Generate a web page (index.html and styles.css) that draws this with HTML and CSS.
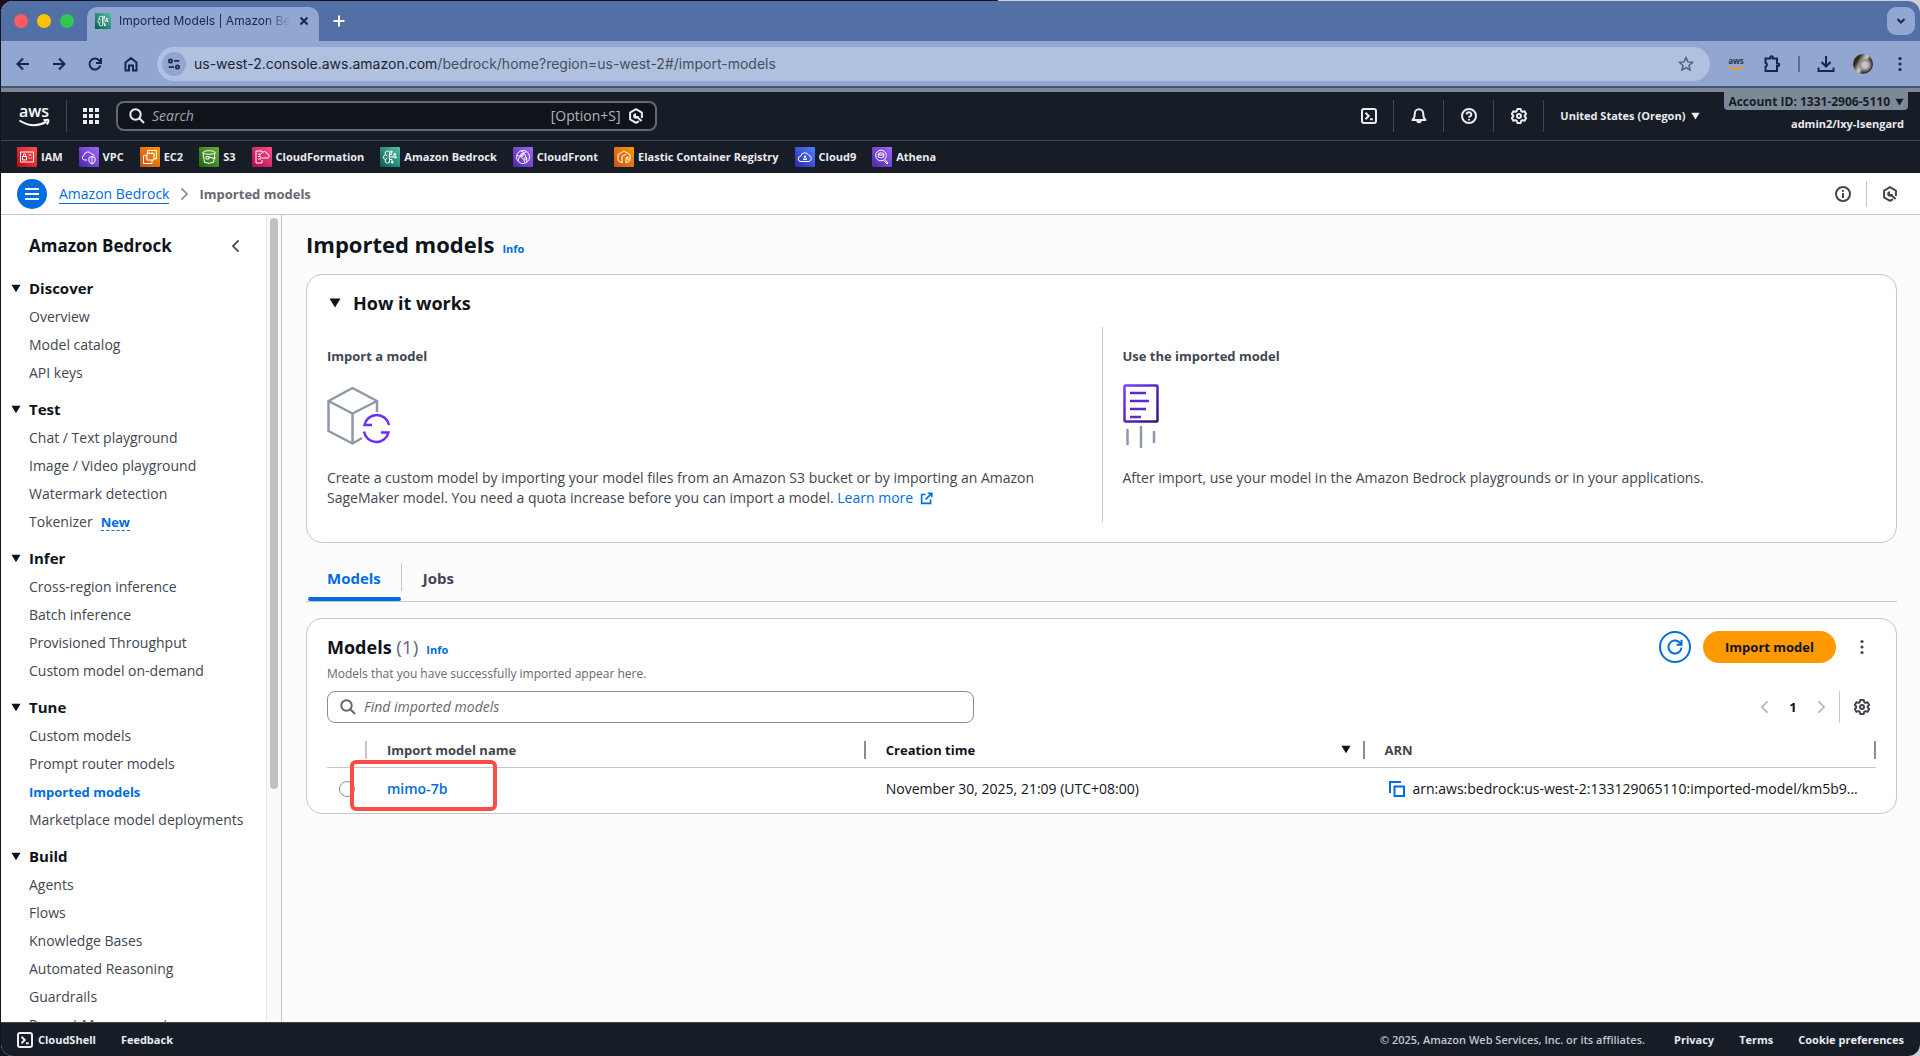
FILE: index.html
```html
<!DOCTYPE html>
<html lang="en">

<head>
    <meta charset="UTF-8">
    <meta name="viewport" content="width=device-width, initial-scale=1.0">
    <title>Imported Models | Amazon Bedrock</title>
    <link rel="stylesheet" href="styles.css">
</head>

<body>

    <!-- Shared icons -->
    <svg class="sprite" aria-hidden="true">
        <symbol id="i-search" viewBox="0 0 16 16">
            <circle cx="6.5" cy="6.5" r="5.2" />
            <path d="M10.3 10.3 15 15" />
        </symbol>
        <symbol id="i-gear" viewBox="0 0 16 16">
            <path d="M6.3 1h3.4l.5 2.1 1.3.8 2.1-.7 1.6 2.9-1.5 1.400v1l1.500 1.400-1.600 2.900-2.100-.7-1.300.8-.5 2.100H6.300l-.5-2.100-1.300-.8-2.100.7L.8 9.900l1.500-1.400v-1L.8 6.100l1.600-2.900 2.100.7 1.300-.8z" stroke-linejoin="round" />
            <circle cx="8" cy="8" r="2" />
        </symbol>
        <symbol id="i-hex" viewBox="0 0 16 16">
            <path d="M13.900 10V4.600L8 1.200 2.100 4.600v6.800L8 14.800l3-1.700" stroke-linejoin="round" />
            <path d="M8 5.200a2.800 2.800 0 1 0 2.800 2.800L8 8z" fill="currentColor" stroke="none" />
            <path d="m8.500 8.500 5.200 4.500" />
        </symbol>
        <symbol id="i-shell" viewBox="0 0 16 16">
            <rect x="1" y="1" width="14" height="14" rx="2" />
            <path d="m4.5 4.8 3.2 3.2-3.2 3.2M9 11.2h2.8" />
        </symbol>
        <symbol id="i-left" viewBox="0 0 16 16">
            <path d="M11 1.500 4.500 8l6.500 6.500" />
        </symbol>
        <symbol id="i-right" viewBox="0 0 16 16">
            <path d="M5 1.500 11.500 8 5 14.500" />
        </symbol>
        <symbol id="i-caret" viewBox="0 0 12 10">
            <path d="M.5 .5h11L6 9.500z" fill="currentColor" stroke="none" />
        </symbol>
        <symbol id="i-dots" viewBox="0 0 16 16">
            <g fill="currentColor" stroke="none">
                <circle cx="8" cy="2.5" r="1.6" />
                <circle cx="8" cy="8" r="1.6" />
                <circle cx="8" cy="13.5" r="1.6" />
            </g>
        </symbol>
        <symbol id="i-bedrock" viewBox="0 0 20 20">
            <path d="M9.500 4.500v11M9.500 5 7.500 3.800 5.300 5v2.600L3.700 9v2.500l1.600 1v2.600l2.200 1.200 2-1.200M5.300 7.600 7.500 9M5.300 12.500l2-1.300M11.500 7.500V5.200M11.500 7.500h-2M9.500 10h5M9.500 12.500h2.500v2.300M12.500 10l1.800-2.400" />
            <g fill="currentColor" stroke="none">
                <circle cx="11.5" cy="4.7" r="1.2" />
                <circle cx="14.8" cy="7.2" r="1.2" />
                <circle cx="15.5" cy="10.2" r="1.2" />
                <circle cx="12.3" cy="15.3" r="1.2" />
            </g>
        </symbol>
    </svg>

    <div class="window">

        <!-- Browser tab strip -->
        <div class="tab-strip">
            <div class="lights">
                <span class="light red"></span>
                <span class="light yellow"></span>
                <span class="light green"></span>
            </div>
            <div class="browser-tab">
                <span class="favicon bedrock"><svg><use href="#i-bedrock" /></svg></span>
                <span class="tab-title">Imported Models | Amazon Bedrock</span>
                <button class="icon-btn" aria-label="Close tab">
                    <svg class="s10" viewBox="0 0 10 10"><path d="m1.5 1.5 7 7M8.5 1.5l-7 7" /></svg>
                </button>
            </div>
            <button class="icon-btn new-tab" aria-label="New tab">
                <svg class="s12" viewBox="0 0 12 12"><path d="M6 .5v11M.5 6h11" /></svg>
            </button>
            <button class="tab-search" aria-label="Search tabs">
                <svg class="s10" viewBox="0 0 10 10"><path d="m1.5 3 3.5 3.5L8.5 3" /></svg>
            </button>
        </div>

        <!-- Browser toolbar -->
        <div class="toolbar">
            <button class="icon-btn nav-btn" aria-label="Back"><svg viewBox="0 0 16 16"><path d="M14 8H2.5M8 2.5 2.5 8 8 13.5" /></svg></button>
            <button class="icon-btn nav-btn" aria-label="Forward"><svg viewBox="0 0 16 16"><path d="M2 8h11.5M8 2.5 13.5 8 8 13.5" /></svg></button>
            <button class="icon-btn nav-btn" aria-label="Reload"><svg viewBox="0 0 16 16"><path d="M13.3 9.5A5.5 5.5 0 1 1 12.5 4.8L13.5 6" /><path d="M14 2v5H9" /></svg></button>
            <button class="icon-btn nav-btn" aria-label="Home"><svg viewBox="0 0 16 16"><path d="M2.5 6.5 8 2l5.5 4.5v8H10v-5H6v5H2.5z" /></svg></button>
            <div class="omnibox">
                <button class="site-info" aria-label="Site information">
                    <svg viewBox="0 0 16 16"><circle cx="4" cy="4.5" r="1.9" /><path d="M8 4.5h6" /><circle cx="12" cy="11.5" r="1.9" /><path d="M2 11.5h6" /></svg>
                </button>
                <span class="url">us-west-2.console.aws.amazon.com<span class="url-path">/bedrock/home?region=us-west-2#/import-models</span></span>
                <button class="icon-btn star" aria-label="Bookmark">
                    <svg viewBox="0 0 16 16"><path d="m8 1.5 1.9 4.4 4.7.4-3.6 3.1 1.1 4.7L8 11.6l-4.100 2.500L5 9.400 1.400 6.300l4.700-.4z" /></svg>
                </button>
            </div>
            <button class="icon-btn ext" aria-label="AWS extension">
                <svg class="ext-aws" viewBox="0 0 16 16"><text x="8" y="8">aws</text><path d="M1 10.5q7 5 13.500.3" /></svg>
            </button>
            <button class="icon-btn ext" aria-label="Extensions">
                <svg class="s18" viewBox="0 0 18 18"><path d="M2.5 3.5h4.800V2.500a1.300 1.300 0 0 1 2.600 0v1H14v5h1a1.300 1.300 0 0 1 0 2.600h-1V16H2.500v-4.200a2.100 2.100 0 0 0 0-4z" /></svg>
            </button>
            <span class="toolbar-divider"></span>
            <button class="icon-btn ext" aria-label="Downloads">
                <svg class="s18" viewBox="0 0 18 18"><path d="M9 1v10M4.500 7 9 11.500 13.500 7M1.500 12.500V16h15v-3.500" /></svg>
            </button>
            <button class="avatar" aria-label="Profile"></button>
            <button class="icon-btn ext" aria-label="Browser menu"><svg><use href="#i-dots" /></svg></button>
        </div>
        <div class="account-strip"></div>

        <!-- AWS header -->
        <header class="aws-header">
            <a class="aws-logo" href="#" aria-label="AWS home">
                <svg viewBox="0 0 32 24">
                    <text x="16" y="13">aws</text>
                    <path d="M1.500 16.500q14 9 27 1.200" />
                    <path d="M25.500 16.300q5-1.300 5 .2t-1.700 4" />
                </svg>
            </a>
            <button class="icon-btn apps" aria-label="Services">
                <svg viewBox="0 0 16 16">
                    <path d="M0 0h4v4H0zM6 0h4v4H6zM12 0h4v4h-4zM0 6h4v4H0zM6 6h4v4H6zM12 6h4v4h-4zM0 12h4v4H0zM6 12h4v4H6zM12 12h4v4h-4z" fill="currentColor" stroke="none" />
                </svg>
            </button>
            <div class="global-search">
                <svg><use href="#i-search" /></svg>
                <input type="text" placeholder="Search" aria-label="Search">
                <span class="shortcut">[Option+S]</span>
                <svg><use href="#i-hex" /></svg>
            </div>
            <div class="header-tools">
                <button class="tool" aria-label="CloudShell"><svg><use href="#i-shell" /></svg></button>
                <button class="tool" aria-label="Notifications"><svg viewBox="0 0 16 16"><path d="M1.500 12h13c-1.800-1.500-2.300-3-2.300-6.500a4.200 4.200 0 0 0-8.400 0C3.800 9 3.300 10.500 1.500 12z" stroke-linejoin="round" /><path d="M6.300 12.500a1.700 1.700 0 0 0 3.400 0" /></svg></button>
                <button class="tool" aria-label="Help"><svg viewBox="0 0 16 16"><circle cx="8" cy="8" r="7" /><path d="M5.800 6.500a2.200 2.200 0 1 1 3.300 1.800q-1.100.6-1.100 1.500M8 11v1.600" /></svg></button>
                <button class="tool" aria-label="Settings"><svg><use href="#i-gear" /></svg></button>
            </div>
            <button class="region">United States (Oregon) <svg class="caret-sm"><use href="#i-caret" /></svg></button>
            <div class="account">
                <button class="account-id">Account ID: 1331-2906-5110 <svg class="caret-sm"><use href="#i-caret" /></svg></button>
                <span class="user">admin2/lxy-Isengard</span>
            </div>
        </header>

        <!-- Favorites -->
        <nav class="favorites" aria-label="Favorites">
            <a href="#"><span class="svc iam"><svg viewBox="0 0 20 20"><path d="M3.500 5h13v10h-13zM5.500 9.500h4v3.500h-4zM6.300 9.500V8a1.200 1.200 0 0 1 2.400 0v1.500M11.500 8h3M11.500 11h1.200M13.700 11h1" /></svg></span>IAM</a>
            <a href="#"><span class="svc purple"><svg viewBox="0 0 20 20"><path d="M8 13H5.500A2.300 2.300 0 0 1 5 8.500 4 4 0 0 1 12.500 7q2.500-.2 2.800 2M10 10.500l3-1.200 3 1.200v3.500q-.5 2-3 3-2.500-1-3-3zM13 9.500v7" /></svg></span>VPC</a>
            <a href="#"><span class="svc orange"><svg viewBox="0 0 20 20"><path d="M7.500 3.500h9V12h-2M7.500 3.500V6M7 6.500h7V13H7zM3.500 8.500H7M3.500 8.500v8H12V13M9 5v1.500M12 5v1.500M14 8h1.500M14 11h1.500M5.500 11H7" /></svg></span>EC2</a>
            <a href="#"><span class="svc green"><svg viewBox="0 0 20 20"><ellipse cx="10" cy="5.500" rx="6" ry="1.800" /><path d="m4 5.500 1.400 9.800q4.600 2 9.200 0L16 5.500M9.500 10l6.200 1.500q1.800.3-.4-1.500M7 9.500h3v2.500H7z" /></svg></span>S3</a>
            <a href="#"><span class="svc pink"><svg viewBox="0 0 20 20"><path d="M10 5V4H4v12h6v-3M6 7h2M6 9.500h2M6 12h3M9.500 11h5.500a2 2 0 0 0 .3-4 3 3 0 0 0-5.800-.3A2.200 2.200 0 0 0 9.500 11z" /></svg></span>CloudFormation</a>
            <a href="#"><span class="svc bedrock"><svg><use href="#i-bedrock" /></svg></span>Amazon Bedrock</a>
            <a href="#"><span class="svc purple"><svg viewBox="0 0 20 20"><circle cx="10" cy="10" r="6.500" /><path d="M8 4q5 2 6 11M4 8.500q5 0 8 7M5 14q1-6 8-9" /><circle cx="9" cy="8" r="1.300" /><circle cx="12.500" cy="11.500" r="1.300" /></svg></span>CloudFront</a>
            <a href="#"><span class="svc orange"><svg viewBox="0 0 20 20"><path d="M8 16 4 13.500v-6L10 4l6 3.500v6L12 16M8 16V9.500L12 7M12 16v-5l2-1v3.500" /></svg></span>Elastic Container Registry</a>
            <a href="#"><span class="svc blue"><svg viewBox="0 0 20 20"><path d="M6 14.500a2.600 2.600 0 0 1-.3-5.200 4.200 4.200 0 0 1 8-1A3.200 3.200 0 0 1 14 14.500zM8.500 12.500l1.500-4 1.500 4z" /></svg></span>Cloud9</a>
            <a href="#"><span class="svc purple"><svg viewBox="0 0 20 20"><circle cx="9" cy="8.500" r="5.300" /><ellipse cx="9" cy="7" rx="2.700" ry="1.100" /><path d="M6.300 7v3q2.700 1.800 5.400 0V7M13 12.500l3 3.500-1 1-3-3.500" /></svg></span>Athena</a>
        </nav>

        <!-- Breadcrumbs -->
        <div class="breadcrumb-bar">
            <button class="menu-btn" aria-label="Toggle navigation"><svg viewBox="0 0 16 16"><path d="M1 3h14M1 8h14M1 13h14" /></svg></button>
            <nav class="breadcrumbs" aria-label="Breadcrumbs">
                <a href="#">Amazon Bedrock</a>
                <svg><use href="#i-right" /></svg>
                <span>Imported models</span>
            </nav>
            <button class="icon-btn panel-btn" aria-label="Info panel"><svg viewBox="0 0 16 16"><circle cx="8" cy="8" r="7" /><path d="M8 7v5M8 4v1.800" /></svg></button>
            <button class="icon-btn panel-btn" aria-label="Amazon Q"><svg><use href="#i-hex" /></svg></button>
        </div>

        <div class="layout">

            <!-- Side navigation -->
            <aside class="sidebar">
                <nav class="side-nav" aria-label="Amazon Bedrock">
                    <div class="side-head">
                        <h2>Amazon Bedrock</h2>
                        <button class="icon-btn" aria-label="Close navigation"><svg><use href="#i-left" /></svg></button>
                    </div>
                    <h3><svg class="caret"><use href="#i-caret" /></svg>Discover</h3>
                    <ul>
                        <li><a href="#">Overview</a></li>
                        <li><a href="#">Model catalog</a></li>
                        <li><a href="#">API keys</a></li>
                    </ul>
                    <h3><svg class="caret"><use href="#i-caret" /></svg>Test</h3>
                    <ul>
                        <li><a href="#">Chat / Text playground</a></li>
                        <li><a href="#">Image / Video playground</a></li>
                        <li><a href="#">Watermark detection</a></li>
                        <li><a href="#">Tokenizer</a><button class="new-badge">New</button></li>
                    </ul>
                    <h3><svg class="caret"><use href="#i-caret" /></svg>Infer</h3>
                    <ul>
                        <li><a href="#">Cross-region inference</a></li>
                        <li><a href="#">Batch inference</a></li>
                        <li><a href="#">Provisioned Throughput</a></li>
                        <li><a href="#">Custom model on-demand</a></li>
                    </ul>
                    <h3><svg class="caret"><use href="#i-caret" /></svg>Tune</h3>
                    <ul>
                        <li><a href="#">Custom models</a></li>
                        <li><a href="#">Prompt router models</a></li>
                        <li><a href="#" class="active">Imported models</a></li>
                        <li><a href="#">Marketplace model deployments</a></li>
                    </ul>
                    <h3><svg class="caret"><use href="#i-caret" /></svg>Build</h3>
                    <ul>
                        <li><a href="#">Agents</a></li>
                        <li><a href="#">Flows</a></li>
                        <li><a href="#">Knowledge Bases</a></li>
                        <li><a href="#">Automated Reasoning</a></li>
                        <li><a href="#">Guardrails</a></li>
                        <li><a href="#">Prompt Management</a></li>
                    </ul>
                </nav>
                <div class="scroll-track"><div class="scroll-thumb"></div></div>
            </aside>

            <!-- Content -->
            <main class="content">
                <div class="title-row">
                    <h1>Imported models</h1>
                    <a class="info" href="#">Info</a>
                </div>

                <section class="card">
                    <h2 class="expand"><svg class="caret"><use href="#i-caret" /></svg>How it works</h2>
                    <div class="steps">
                        <div class="step">
                            <h3>Import a model</h3>
                            <svg class="step-icon" viewBox="0 0 64 64">
                                <g fill="none" stroke="#8d99a8" stroke-width="2.5" stroke-linejoin="round">
                                    <path d="M50 28V17L25.500 4 1.500 17v30L25.500 59.500 35 54M1.500 17l24 12.500L50 17M25.500 29.500v30" />
                                </g>
                                <g fill="none" stroke="#6b2ff0" stroke-width="2.5">
                                    <path d="M62 41a12.500 12.500 0 0 0-24.500 0H45" />
                                    <path d="M37 47.500a12.500 12.500 0 0 0 24.500 1H54" />
                                </g>
                            </svg>
                            <p>Create a custom model by importing your model files from an Amazon S3 bucket or by importing an Amazon SageMaker model. You need a quota increase before you can import a model. <a href="#">Learn more <svg class="external" viewBox="0 0 16 16"><path d="M7 3H2v11h11V9M9.500 1.500h5v5M14 2 7 9" /></svg></a></p>
                        </div>
                        <div class="step">
                            <h3>Use the imported model</h3>
                            <svg class="step-icon" viewBox="0 0 64 64">
                                <defs>
                                    <linearGradient id="doc" x1="0" y1="0" x2="1" y2="1">
                                        <stop offset="0" stop-color="#7a3cff" />
                                        <stop offset="1" stop-color="#34127c" />
                                    </linearGradient>
                                </defs>
                                <rect x="1.500" y="1.500" width="33" height="36" rx="1" fill="none" stroke="url(#doc)" stroke-width="2.5" />
                                <path d="M7 9h16M7 17h19M7 25h16M7 33h11" fill="none" stroke="#5d2bcb" stroke-width="2.5" />
                                <path d="M4.500 46v14M18 43v20M31 48v10" fill="none" stroke="#8d99a8" stroke-width="2.5" stroke-linecap="round" />
                            </svg>
                            <p>After import, use your model in the Amazon Bedrock playgrounds or in your applications.</p>
                        </div>
                    </div>
                </section>

                <div class="tabs" role="tablist">
                    <button class="tab selected" role="tab" aria-selected="true">Models</button>
                    <button class="tab" role="tab" aria-selected="false">Jobs</button>
                </div>

                <section class="card models">
                    <div class="models-head">
                        <div class="models-title">
                            <h2>Models <span class="count">(1)</span></h2>
                            <a class="info" href="#">Info</a>
                            <p>Models that you have successfully imported appear here.</p>
                        </div>
                        <div class="actions">
                            <button class="refresh" aria-label="Refresh"><svg viewBox="0 0 16 16"><path d="M14.500 8.500A6.500 6.500 0 1 1 12.500 3.300L14 5" /><path d="M14.500.8v5h-5" /></svg></button>
                            <button class="primary">Import model</button>
                            <button class="icon-btn more" aria-label="More actions"><svg><use href="#i-dots" /></svg></button>
                        </div>
                    </div>

                    <div class="filter-row">
                        <div class="filter">
                            <svg><use href="#i-search" /></svg>
                            <input type="text" placeholder="Find imported models" aria-label="Find imported models">
                        </div>
                        <div class="pagination">
                            <button class="icon-btn page-arrow" aria-label="Previous page"><svg><use href="#i-left" /></svg></button>
                            <button class="page">1</button>
                            <button class="icon-btn page-arrow" aria-label="Next page"><svg><use href="#i-right" /></svg></button>
                            <button class="icon-btn prefs" aria-label="Preferences"><svg><use href="#i-gear" /></svg></button>
                        </div>
                    </div>

                    <table>
                        <thead>
                            <tr>
                                <th class="select-col"></th>
                                <th class="name-col">Import model name</th>
                                <th class="time-col sorted"><span>Creation time<svg class="caret"><use href="#i-caret" /></svg></span></th>
                                <th>ARN</th>
                            </tr>
                        </thead>
                        <tbody>
                            <tr>
                                <td class="select-cell"><input type="radio" name="model" aria-label="mimo-7b"></td>
                                <td class="name-cell"><a href="#">mimo-7b</a><span class="highlight"></span></td>
                                <td>November 30, 2025, 21:09 (UTC+08:00)</td>
                                <td>
                                    <div class="arn">
                                        <button class="icon-btn copy" aria-label="Copy ARN"><svg viewBox="0 0 16 16"><path d="M5.500 5.500H15V15H5.500zM1 12V1h11" /></svg></button>
                                        <span>arn:aws:bedrock:us-west-2:133129065110:imported-model/km5b9...</span>
                                    </div>
                                </td>
                            </tr>
                        </tbody>
                    </table>
                </section>
            </main>
        </div>

        <footer class="footer">
            <button class="foot-btn"><svg><use href="#i-shell" /></svg>CloudShell</button>
            <a href="#">Feedback</a>
            <span class="copyright">© 2025, Amazon Web Services, Inc. or its affiliates.</span>
            <a href="#">Privacy</a>
            <a href="#">Terms</a>
            <a href="#">Cookie preferences</a>
        </footer>
    </div>

</body>

</html>
```

FILE: styles.css
```css
/* Reset */
* {
    margin: 0;
    padding: 0;
    box-sizing: border-box;
}

body {
    height: 100vh;
    padding: 1px 0 0 1px;
    font-family: "Open Sans", "Noto Sans", sans-serif;
    font-size: 14px;
    line-height: 20px;
    color: #0f141a;
    background: linear-gradient(to right, #14151c 52%, #cfcfcf 52%);
}

button,
input {
    font: inherit;
    color: inherit;
    background: none;
    border: none;
}

button {
    cursor: pointer;
}

a {
    color: #006ce0;
    text-decoration: none;
}

ul {
    list-style: none;
}

svg {
    display: block;
    flex: none;
    width: 16px;
    height: 16px;
    fill: none;
    stroke: currentColor;
    stroke-width: 2;
}

.sprite {
    position: absolute;
    width: 0;
    height: 0;
}

.s10 {
    width: 10px;
    height: 10px;
}

.s12 {
    width: 12px;
    height: 12px;
}

.s18 {
    width: 18px;
    height: 18px;
}

.caret {
    width: 12px;
    height: 10px;
}

.caret-sm {
    width: 9px;
    height: 8px;
}

.icon-btn {
    display: flex;
    align-items: center;
    justify-content: center;
}

.window {
    height: 100%;
    display: flex;
    flex-direction: column;
    border-radius: 12px;
    overflow: hidden;
    background: #fcfcfd;
}

/* Browser tab strip */
.tab-strip {
    flex: none;
    height: 40px;
    display: flex;
    align-items: flex-end;
    padding: 0 5px 0 13px;
    background: #526fa6;
    font-family: Inter, sans-serif;
}

.lights {
    display: flex;
    gap: 9px;
    height: 100%;
    align-items: center;
    margin-right: 13px;
}

.light {
    width: 14px;
    height: 14px;
    border-radius: 50%;
}

.red {
    background: #ff5a5f;
}

.yellow {
    background: #fdc300;
}

.green {
    background: #2fc653;
}

.browser-tab {
    width: 232px;
    height: 34px;
    display: flex;
    align-items: center;
    gap: 8px;
    padding: 0 10px 6px 8px;
    border-radius: 10px 10px 0 0;
    background: #91a7d2;
    color: #14284b;
    font-size: 12px;
}

.favicon {
    flex: none;
    width: 16px;
    height: 16px;
    color: #fff;
}

.favicon svg {
    stroke-width: 1;
}

.tab-title {
    flex: 1;
    overflow: hidden;
    white-space: nowrap;
    -webkit-mask-image: linear-gradient(to left, transparent, #000 26px);
    mask-image: linear-gradient(to left, transparent, #000 26px);
}

.new-tab {
    height: 40px;
    padding: 0 14px;
    color: #fff;
}

.tab-search {
    width: 28px;
    height: 28px;
    display: flex;
    align-items: center;
    justify-content: center;
    margin: 0 0 6px auto;
    border-radius: 9px;
    background: #91a7d2;
    color: #14284b;
}

/* Browser toolbar */
.toolbar {
    flex: none;
    height: 47px;
    display: flex;
    align-items: center;
    padding: 0 2px 0 4px;
    background: #91a7d2;
    border-bottom: 2px solid #46566f;
    color: #0d2857;
}

.nav-btn,
.ext {
    width: 36px;
    height: 34px;
}

.omnibox {
    flex: 1;
    height: 34px;
    display: flex;
    align-items: center;
    margin: 0 8px;
    padding: 0 16px 0 5px;
    border-radius: 17px;
    background: #b0c0df;
}

.site-info {
    width: 24px;
    height: 24px;
    display: flex;
    align-items: center;
    justify-content: center;
    margin-right: 8px;
    border-radius: 50%;
    background: #91a7d2;
    color: #1f2d45;
}

.site-info svg {
    width: 14px;
    height: 14px;
}

.url {
    flex: 1;
    font-family: Inter, sans-serif;
    color: #1d2430;
}

.url-path {
    color: #474f5d;
}

.star {
    color: #55606f;
}

.star svg {
    stroke-width: 1.4;
}

.ext-aws text {
    font-family: "Open Sans", sans-serif;
    font-size: 8px;
    font-weight: 700;
    text-anchor: middle;
    fill: #28354f;
    stroke: none;
}

.ext-aws path {
    stroke: #f79a1e;
}

.toolbar-divider {
    width: 2px;
    height: 16px;
    margin: 0 8px;
    background: #526fa6;
}

.avatar {
    width: 20px;
    height: 20px;
    margin: 0 9px;
    border-radius: 50%;
    background: radial-gradient(circle at 60% 55%, #c9c5cc 15%, #8f8b90 30%, transparent 45%), linear-gradient(120deg, #32281f 25%, #a89c8e 40%, #d5cfc6 50%, #4c4034 62%, #1e1813);
}

.account-strip {
    flex: none;
    height: 4px;
    background: #7d8998;
}

/* AWS header */
.aws-header {
    flex: none;
    height: 49px;
    display: flex;
    align-items: center;
    padding: 0 12px 0 17px;
    background: #161d26;
    border-bottom: 1px solid #424650;
    color: #ebebf0;
    font-size: 11px;
    font-weight: 700;
}

.aws-logo {
    height: 32px;
    display: flex;
    align-items: center;
    padding-right: 16px;
    border-right: 1px solid #424650;
    color: #fff;
}

.aws-logo svg {
    width: 32px;
    height: 24px;
}

.aws-logo text {
    font-size: 16px;
    font-weight: 600;
    text-anchor: middle;
    fill: #fff;
    stroke: none;
}

.apps {
    padding: 0 17px 0 16px;
}

.global-search {
    width: 28.6%;
    height: 30px;
    display: flex;
    align-items: center;
    gap: 7px;
    padding: 0 11px;
    border: 2px solid #656871;
    border-radius: 8px;
    background: #0f141a;
    font-size: 14px;
    font-weight: 400;
}

.global-search input {
    flex: 1;
    min-width: 0;
}

.global-search input::placeholder {
    color: #a4a4ad;
    font-style: italic;
    opacity: 1;
}

.shortcut {
    color: #b4b4bb;
}

.header-tools {
    display: flex;
    margin-left: auto;
}

.tool {
    width: 50px;
    height: 32px;
    display: flex;
    align-items: center;
    justify-content: center;
    border-right: 1px solid #424650;
}

.region {
    display: flex;
    align-items: center;
    gap: 6px;
    padding: 0 24px 0 16px;
}

.account {
    align-self: stretch;
    display: flex;
    flex-direction: column;
    align-items: flex-end;
    gap: 4px;
}

.account-id {
    height: 18px;
    display: flex;
    align-items: center;
    gap: 5px;
    padding: 2px 4px 0;
    border-radius: 0 0 4px 4px;
    background: #7d8998;
    color: #161d26;
    font-size: 12px;
}

.user {
    padding-right: 4px;
    line-height: 20px;
}

/* Favorites */
.favorites {
    flex: none;
    height: 32px;
    display: flex;
    align-items: center;
    gap: 16px;
    padding: 0 16px;
    background: #161d26;
    font-size: 11px;
    font-weight: 700;
    white-space: nowrap;
}

.favorites a {
    display: flex;
    align-items: center;
    gap: 4px;
    color: #ebebf0;
}

.svc {
    width: 20px;
    height: 20px;
    border-radius: 1px;
    color: #fff;
}

.svc svg {
    width: 20px;
    height: 20px;
    stroke-width: 1;
}

.iam {
    background: linear-gradient(45deg, #bd0816, #ff5252);
}

.purple {
    background: linear-gradient(45deg, #4d27a8, #a166ff);
}

.orange {
    background: linear-gradient(45deg, #c8511b, #ff9900);
}

.green.svc {
    background: linear-gradient(45deg, #1b660f, #6cae3e);
}

.pink {
    background: linear-gradient(45deg, #b0084d, #ff4f8b);
}

.bedrock {
    background: linear-gradient(45deg, #055f4e, #56c0a7);
}

.blue {
    background: linear-gradient(45deg, #2e27ad, #527fff);
}

/* Breadcrumbs */
.breadcrumb-bar {
    flex: none;
    height: 42px;
    display: flex;
    align-items: center;
    padding: 0 8px 0 16px;
    background: #fff;
    border-bottom: 1px solid #c6c6cd;
}

.menu-btn {
    width: 30px;
    height: 30px;
    display: flex;
    align-items: center;
    justify-content: center;
    border-radius: 50%;
    background: #006ce0;
    color: #fff;
}

.breadcrumbs {
    flex: 1;
    display: flex;
    align-items: center;
    gap: 8px;
    padding-left: 12px;
    color: #656871;
    font-size: 13px;
    font-weight: 700;
}

.breadcrumbs a {
    border-bottom: 1px solid #006ce0;
    font-size: 14px;
    font-weight: 400;
    line-height: 19px;
}

.breadcrumbs svg {
    color: #8c8c94;
    width: 14px;
    height: 14px;
}

.panel-btn {
    width: 46px;
    height: 26px;
    color: #424650;
}

.panel-btn + .panel-btn {
    border-left: 1px solid #c6c6cd;
}

/* Layout */
.layout {
    flex: 1;
    min-height: 0;
    display: flex;
}

.sidebar {
    flex: none;
    width: 281px;
    display: flex;
    overflow: hidden;
    background: #fff;
    border-right: 1px solid #c6c6cd;
}

.side-nav {
    flex: 1;
    padding: 16px 23px 0 10px;
}

.side-head {
    display: flex;
    align-items: center;
    justify-content: space-between;
    height: 30px;
    padding-left: 18px;
    margin-bottom: 12px;
}

.side-head h2 {
    font-size: 17px;
    font-weight: 700;
}

.side-head button {
    color: #424650;
}

.side-head svg {
    width: 14px;
    height: 14px;
}

.side-nav h3 {
    display: flex;
    align-items: center;
    gap: 8px;
    height: 30px;
    margin-top: 7px;
    font-size: 15px;
    font-weight: 700;
}

.side-nav h3 .caret {
    width: 10px;
    height: 9px;
}

.side-nav ul {
    padding-left: 18px;
}

.side-nav li {
    height: 28px;
    display: flex;
    align-items: center;
    gap: 8px;
    white-space: nowrap;
}

.side-nav li a {
    color: #424650;
}

.side-nav li a.active {
    color: #006ce0;
    font-size: 13px;
    font-weight: 700;
}

.new-badge {
    line-height: 16px;
    color: #006ce0;
    font-size: 13px;
    font-weight: 700;
    border-bottom: 1px dashed #006ce0;
}

.scroll-track {
    width: 15px;
    padding: 3px 3px 0;
    background: #fafafa;
    border-left: 1px solid #e7e7e7;
}

.scroll-thumb {
    width: 8px;
    height: 71%;
    border-radius: 4px;
    background: #c1c1c1;
}

/* Content */
.content {
    flex: 1;
    min-width: 0;
    padding: 14px 23px 0 24px;
}

.title-row {
    display: flex;
    align-items: baseline;
    gap: 8px;
    height: 45px;
}

h1 {
    font-size: 22px;
    font-weight: 700;
    line-height: 30px;
}

.info {
    font-size: 11px;
    font-weight: 700;
}

.card {
    padding: 16px 20px 20px;
    border: 1px solid #c6c6cd;
    border-radius: 16px;
    background: #fff;
}

.card h2 {
    font-size: 18px;
    font-weight: 700;
    line-height: 24px;
}

.expand {
    display: flex;
    align-items: center;
    gap: 12px;
    padding-left: 2px;
}

.steps {
    display: grid;
    grid-template-columns: 1fr 1fr;
    margin-top: 12px;
}

.step {
    min-height: 195px;
    padding: 19px 20px 14px 0;
    color: #424650;
}

.step + .step {
    padding-left: 20px;
    border-left: 1px solid #c6c6cd;
}

.step h3 {
    font-size: 13px;
    font-weight: 700;
}

.step-icon {
    width: 64px;
    height: 64px;
    margin: 18px 0 20px;
}

.external {
    display: inline-block;
    width: 13px;
    height: 13px;
    margin-left: 3px;
    vertical-align: -2px;
}

/* Tabs */
.tabs {
    display: flex;
    align-items: flex-end;
    margin: 16px 0;
    border-bottom: 1px solid #c6c6cd;
}

.tab {
    position: relative;
    height: 42px;
    padding: 0 21px 4px;
    font-size: 15px;
    font-weight: 700;
    color: #424650;
}

.tab.selected {
    color: #006ce0;
}

.tab.selected::before {
    content: "";
    position: absolute;
    right: 0;
    top: 4px;
    width: 1px;
    height: 28px;
    background: #c6c6cd;
}

.tab.selected::after {
    content: "";
    position: absolute;
    left: 2px;
    right: 1px;
    bottom: 0;
    height: 4px;
    border-radius: 2px;
    background: #006ce0;
}

/* Models */
.models {
    padding: 12px 20px 0;
}

.models-head,
.models-title,
.actions,
.filter-row,
.filter,
.pagination,
.arn {
    display: flex;
    align-items: center;
}

.models-head {
    align-items: flex-start;
    justify-content: space-between;
}

.models-title {
    flex-wrap: wrap;
    align-items: baseline;
    column-gap: 8px;
    padding-top: 4px;
}

.models-title p {
    width: 100%;
    margin-top: 6px;
    font-size: 12px;
    line-height: 16px;
    color: #656871;
}

.card .count {
    font-size: 19px;
    font-weight: 400;
    color: #656871;
}

.actions {
    gap: 12px;
}

.refresh {
    width: 32px;
    height: 32px;
    display: flex;
    align-items: center;
    justify-content: center;
    border: 2px solid #006ce0;
    border-radius: 50%;
    color: #006ce0;
}

.primary {
    height: 32px;
    padding: 0 22px;
    border-radius: 16px;
    background: #ff9900;
    font-size: 13px;
    font-weight: 700;
}

.more,
.prefs {
    width: 28px;
    height: 32px;
    color: #424650;
}

.filter-row {
    justify-content: space-between;
    margin-top: 9px;
}

.filter {
    width: 41.8%;
    height: 32px;
    gap: 8px;
    padding: 0 12px;
    border: 1px solid #8c8c94;
    border-radius: 8px;
    color: #656871;
}

.filter input {
    flex: 1;
}

.filter input::placeholder {
    color: #656871;
    font-style: italic;
    opacity: 1;
}

.page-arrow {
    width: 28px;
    height: 32px;
    color: #b4b4bb;
}

.page-arrow svg {
    width: 14px;
    height: 14px;
}

.page {
    width: 28px;
    font-size: 13px;
    font-weight: 700;
}

.prefs {
    width: 37px;
    padding-left: 8px;
    margin-left: 4px;
    border-left: 1px solid #c6c6cd;
}

/* Table */
table {
    width: 100%;
    table-layout: fixed;
    border-collapse: separate;
    border-spacing: 0;
    margin-top: 9px;
}

th {
    height: 36px;
    padding: 0 20px;
    text-align: left;
    font-size: 13px;
    font-weight: 700;
    color: #424650;
    border-bottom: 1px solid #c6c6cd;
    background: linear-gradient(#8c8c94, #8c8c94) right center / 2px 18px no-repeat;
}

.select-col {
    width: 40px;
    padding: 0;
    background-image: linear-gradient(#c6c6cd, #c6c6cd);
}

.name-col,
.time-col {
    width: 32.2%;
}

.sorted {
    padding-right: 14px;
    color: #0f141a;
}

.sorted span {
    display: flex;
    align-items: center;
    justify-content: space-between;
}

.sorted .caret {
    width: 10px;
    height: 9px;
}

td {
    height: 45px;
    padding: 0 20px 4px;
    white-space: nowrap;
}

.select-cell {
    padding: 0 0 4px 12px;
}

.select-cell input {
    display: block;
    appearance: none;
    width: 16px;
    height: 16px;
    border: 1px solid #8c8c94;
    border-radius: 50%;
}

.name-cell {
    position: relative;
    font-weight: 600;
}

.highlight {
    position: absolute;
    left: -17px;
    top: -8px;
    width: 147px;
    height: 51px;
    border: 4px solid #fa4d47;
    border-radius: 6px;
}

.arn {
    gap: 8px;
    padding-left: 4px;
}

.copy {
    color: #006ce0;
}

/* Footer */
.footer {
    flex: none;
    height: 34px;
    display: flex;
    align-items: center;
    gap: 25px;
    padding: 0 16px;
    background: #161d26;
    border-top: 1px solid #424650;
    color: #ebebf0;
    font-size: 11px;
    font-weight: 700;
}

.footer a {
    color: #ebebf0;
}

.foot-btn {
    display: flex;
    align-items: center;
    gap: 5px;
}

.copyright {
    margin-left: auto;
    padding-right: 4px;
    font-weight: 600;
    color: #c6c6cd;
}
```
